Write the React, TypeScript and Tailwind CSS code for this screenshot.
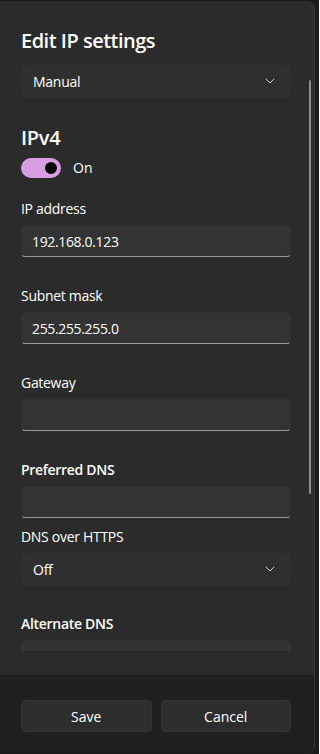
import React from "react";

const font = { fontFamily: '"Segoe UI", "Open Sans", "Noto Sans", sans-serif' };

function Chevron() {
  return (
    <svg width="10" height="6" viewBox="0 0 10 6" fill="none" className="text-[#d0d0d0]">
      <path d="M1 1l4 4 4-4" stroke="currentColor" strokeWidth="1" strokeLinecap="round" strokeLinejoin="round" />
    </svg>
  );
}

function Select({ value }: { value: string }) {
  return (
    <div className="flex h-[32px] items-center justify-between rounded-[4px] border border-[#303030] bg-[#2f2f2f] pl-[11px] pr-[15px]">
      <span className="text-[14px] tracking-[-0.25px] text-white">{value}</span>
      <Chevron />
    </div>
  );
}

function Field({ value }: { value?: string }) {
  return (
    <div className="flex h-[32px] items-center rounded-[4px] border border-[#303030] border-b-[#9a9a9a] bg-[#333333] px-[10px]">
      <span className="text-[14px] tracking-[-0.35px] text-white">{value}</span>
    </div>
  );
}

function Label({ children, bold }: { children: React.ReactNode; bold?: boolean }) {
  return (
    <div
      className={`h-[20px] text-[14px] leading-[20px] tracking-[-0.3px] text-white ${bold ? "font-semibold" : ""}`}
    >
      {children}
    </div>
  );
}

export default function App() {
  return (
    <div className="h-[754px] w-[319px] overflow-hidden bg-[#1b1b1b] pt-px" style={font}>
      <div className="flex h-[752px] w-[315px] flex-col overflow-hidden rounded-r-[8px] border-r border-[#3a3a3a] bg-[#2b2b2b]">
        {/* Scrolling content */}
        <div className="relative h-[650px] overflow-hidden pl-[21px] pr-[23px] pt-[26px]">
          <h1 className="text-[20px] font-semibold leading-[28px] tracking-[-0.5px] text-white">Edit IP settings</h1>
          <div className="mt-[10px]">
            <Select value="Manual" />
          </div>

          <h2 className="mt-[27px] text-[20px] font-semibold leading-[28px] tracking-[-0.3px] text-white">IPv4</h2>
          <div className="mt-[5px] flex items-center gap-[12px]">
            <div className="flex h-[20px] w-[40px] items-center justify-end rounded-full bg-[#d79ee2] pr-[4px]">
              <div className="h-[12px] w-[12px] rounded-full bg-black" />
            </div>
            <span className="text-[14px] text-white">On</span>
          </div>

          <div className="mt-[21px]">
            <Label>IP address</Label>
          </div>
          <div className="mt-[6px]">
            <Field value="192.168.0.123" />
          </div>

          <div className="mt-[29px]">
            <Label>Subnet mask</Label>
          </div>
          <div className="mt-[6px]">
            <Field value="255.255.255.0" />
          </div>

          <div className="mt-[29px]">
            <Label>Gateway</Label>
          </div>
          <div className="mt-[6px]">
            <Field />
          </div>

          <div className="mt-[29px]">
            <Label bold>Preferred DNS</Label>
          </div>
          <div className="mt-[6px]">
            <Field />
          </div>

          <div className="mt-[9px]">
            <Label>DNS over HTTPS</Label>
          </div>
          <div className="mt-[6px]">
            <Select value="Off" />
          </div>

          <div className="mt-[29px]">
            <Label bold>Alternate DNS</Label>
          </div>
          <div className="mt-[6px]">
            <Field />
          </div>

          {/* scrollbar */}
          <div className="absolute right-[3px] top-[79px] h-[414px] w-[2px] rounded-full bg-[#8f8f8f]" />
        </div>
        <div className="h-[24px]" />

        {/* Footer */}
        <div className="flex flex-1 gap-[9px] bg-[#202020] pl-[21px] pr-[23px] pt-[25px]">
          <button className="h-[32px] flex-1 rounded-[4px] border border-[#343434] bg-[#2d2d2d] text-[14px] text-white">
            Save
          </button>
          <button className="h-[32px] flex-1 rounded-[4px] border border-[#343434] bg-[#2d2d2d] text-[14px] text-white">
            Cancel
          </button>
        </div>
      </div>
    </div>
  );
}
